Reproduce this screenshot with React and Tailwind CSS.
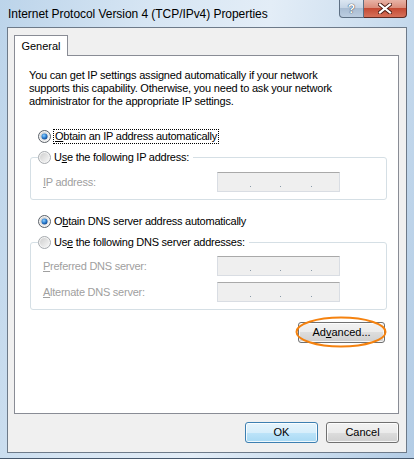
import React from 'react';

/**
 * Vista-style "Internet Protocol Version 4 (TCP/IPv4) Properties" dialog
 */
const Radio = ({ checked }) => (
  <svg width="13" height="13" viewBox="0 0 13 13" className="shrink-0">
    <defs>
      <linearGradient id={checked ? 'rgOn' : 'rgOff'} x1="0" y1="0" x2="1" y2="1">
        <stop offset="0" stopColor="#cfcfcf" />
        <stop offset="1" stopColor="#f6f6f6" />
      </linearGradient>
      <radialGradient id="dot" cx="0.4" cy="0.35" r="0.7">
        <stop offset="0" stopColor="#8fd0ff" />
        <stop offset="0.55" stopColor="#2d7fd0" />
        <stop offset="1" stopColor="#0d3f86" />
      </radialGradient>
    </defs>
    <circle cx="6.5" cy="6.5" r="6" fill="#f4f4f4" stroke={checked ? '#5a6068' : '#a5a9ad'} strokeWidth="1" />
    <circle cx="6.5" cy="6.5" r="4.5" fill={`url(#${checked ? 'rgOn' : 'rgOff'})`} />
    {checked && <circle cx="6.5" cy="6.5" r="3" fill="url(#dot)" />}
  </svg>
);

const IpBox = () => (
  <div className="w-[123px] h-[20px] bg-[#efefef] border border-[#d9dde3] border-t-[#a9a9a9] flex items-end pb-[4px]">
    <span className="w-px h-px bg-[#8a9aa8] ml-[32px]" />
    <span className="w-px h-px bg-[#8a9aa8] ml-[29px]" />
    <span className="w-px h-px bg-[#8a9aa8] ml-[30px]" />
  </div>
);

const Button = ({ children, primary, className = '' }) => (
  <button
    className={`h-[21px] rounded-[3px] border text-[11px] text-black leading-none shadow-[inset_0_0_0_1px_rgba(255,255,255,0.8)] ${
      primary
        ? 'border-[#3c7fb1] bg-[linear-gradient(#e5f4fc_0%,#d7eefb_50%,#bde4f9_50%,#a8d9f4_100%)]'
        : 'border-[#707070] bg-[linear-gradient(#f2f2f2_0%,#ebebeb_50%,#dddddd_50%,#cfcfcf_100%)]'
    } ${className}`}
  >
    {children}
  </button>
);

const App = () => {
  return (
    <div className="w-[414px] h-[459px] flex flex-col bg-[linear-gradient(100deg,#bcd4ea_0%,#d6e5f3_30%,#e3edf7_55%,#c9dcee_80%,#b3cce5_100%)] font-['Liberation_Sans',Arial,sans-serif] text-[11px] text-black border-b border-[#46586d] overflow-hidden">
      {/* Title bar */}
      <div className="h-[27px] shrink-0 flex items-start justify-between pl-[8px] pr-[7px]">
        <span className="mt-[7px] text-[12px] leading-[14px] tracking-[-0.05px]">
          Internet Protocol Version 4 (TCP/IPv4) Properties
        </span>
        <div className="flex">
          <div className="w-[25px] h-[18px] rounded-bl-[4px] border border-t-0 border-[#5d6f83] bg-[linear-gradient(#dbe6f1_0%,#c3d3e4_50%,#a9bdd3_50%,#bccde0_100%)] flex items-center justify-center text-white font-bold text-[12px] [text-shadow:0_0_1px_#2b3b4f,0_0_1px_#2b3b4f]">
            ?
          </div>
          <div className="w-[43px] h-[18px] rounded-br-[4px] border border-t-0 border-l-0 border-[#5e2a22] bg-[linear-gradient(#e8b3a6_0%,#d98977_50%,#c44a34_50%,#d6715a_100%)] flex items-center justify-center">
            <svg width="14" height="11" viewBox="0 0 14 11">
              <path d="M2 1.5 L12 9.5 M12 1.5 L2 9.5" stroke="#4a1a12" strokeWidth="4" strokeLinecap="square" />
              <path d="M2 1.5 L12 9.5 M12 1.5 L2 9.5" stroke="#ffffff" strokeWidth="2.2" strokeLinecap="square" />
            </svg>
          </div>
        </div>
      </div>

      {/* Client area */}
      <div className="mx-[7px] h-[426px] border border-[#6d7a89] bg-[#f0f0f0] flex flex-col pt-[7px] pl-[6px]">
        {/* Tab strip */}
        <div className="flex">
          <div className="relative z-10 -mb-px w-[54px] h-[21px] border border-b-0 border-[#898c95] bg-white flex items-center justify-center pt-[1px]">
            General
          </div>
        </div>

        {/* Tab panel */}
        <div className="w-[385px] h-[359px] border border-[#898c95] bg-white flex flex-col">
          <p className="pl-[14px] pt-[13px] leading-[13px] tracking-[-0.2px]">
            You can get IP settings assigned automatically if your network
            <br />
            supports this capability. Otherwise, you need to ask your network
            <br />
            administrator for the appropriate IP settings.
          </p>

          <div className="mt-[21px] ml-[23px] h-[15px] flex items-center gap-[2px]">
            <Radio checked />
            <span className="border border-dotted border-black px-px leading-[13px] tracking-[-0.25px]">
              <u>O</u>btain an IP address automatically
            </span>
          </div>

          <fieldset className="mt-[6px] ml-[15px] w-[357px] border border-[#d5dfe5] rounded-[3px] pb-[7px]">
            <legend className="ml-[7px] pr-[4px] h-[15px] flex items-center gap-[3px] tracking-[-0.25px]">
              <Radio />
              <span>
                U<u>s</u>e the following IP address:
              </span>
            </legend>
            <div className="pt-[7px] pl-[12px] flex items-center text-[#a0a0a0] tracking-[-0.25px]">
              <span className="w-[174px]">
                <u>I</u>P address:
              </span>
              <IpBox />
            </div>
          </fieldset>

          <div className="mt-[14px] ml-[23px] h-[15px] flex items-center gap-[3px] tracking-[-0.25px]">
            <Radio checked />
            <span>
              O<u>b</u>tain DNS server address automatically
            </span>
          </div>

          <fieldset className="mt-[6px] ml-[15px] w-[357px] border border-[#d5dfe5] rounded-[3px] pb-[7px]">
            <legend className="ml-[7px] pr-[4px] h-[15px] flex items-center gap-[3px] tracking-[-0.25px]">
              <Radio />
              <span>
                Us<u>e</u> the following DNS server addresses:
              </span>
            </legend>
            <div className="pt-[6px] pl-[12px] flex flex-col gap-[6px] text-[#a0a0a0] tracking-[-0.25px]">
              <div className="flex items-center">
                <span className="w-[174px]">
                  <u>P</u>referred DNS server:
                </span>
                <IpBox />
              </div>
              <div className="flex items-center">
                <span className="w-[174px]">
                  <u>A</u>lternate DNS server:
                </span>
                <IpBox />
              </div>
            </div>
          </fieldset>

          <div className="mt-[12px] mr-[13px] self-end relative">
            <Button className="w-[87px]">
              Ad<u>v</u>anced...
            </Button>
            {/* Orange highlight ring */}
            <svg
              className="absolute -left-[3px] -top-[6px] pointer-events-none"
              width="92"
              height="32"
              viewBox="0 0 92 32"
            >
              <ellipse cx="46" cy="16" rx="44.5" ry="14.5" fill="none" stroke="#f5820f" strokeWidth="2" />
            </svg>
          </div>
        </div>

        {/* Dialog buttons */}
        <div className="mt-[8px] pr-[7px] flex justify-end gap-[8px]">
          <Button primary className="w-[73px]">
            OK
          </Button>
          <Button className="w-[73px]">Cancel</Button>
        </div>
      </div>
    </div>
  );
};

export default App;
